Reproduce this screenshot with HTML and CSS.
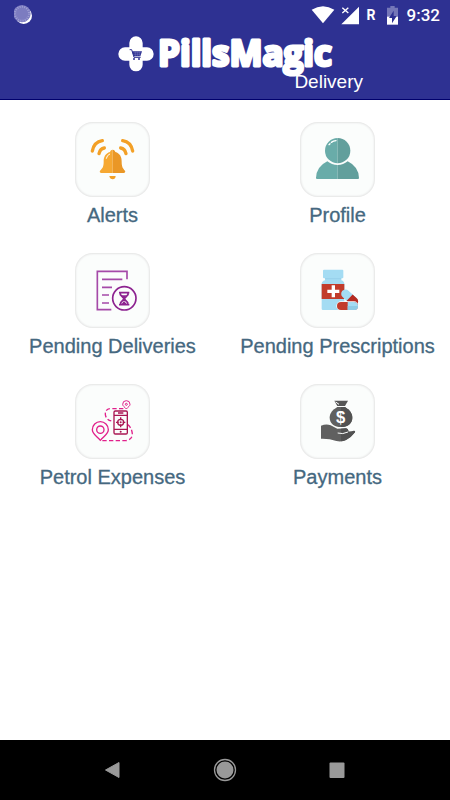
FILE: index.html
```html
<!DOCTYPE html>
<html lang="en">
<head>
<meta charset="utf-8">
<meta name="viewport" content="width=device-width, initial-scale=1">
<title>PillsMagic Delivery</title>
<link rel="stylesheet" href="styles.css">
</head>
<body>
<header class="top">
  <div class="status">
    <svg class="sync" width="20" height="20" viewBox="4 0 60 60" aria-hidden="true">
      <circle cx="33" cy="32" r="25" fill="#fff"/>
      <circle cx="28" cy="26" r="26" fill="#7c7cc0"/>
      <circle cx="28" cy="26" r="21" fill="none" stroke="#a0a0d4" stroke-width="6" stroke-dasharray="3 4"/>
    </svg>
    <div class="status-right">
      <svg width="94" height="22" viewBox="30 12 282 66" aria-hidden="true">
        <path d="M32 29Q66 8 100 29L66 70Z" fill="#fff"/>
        <path d="M174 20V73H121Z" fill="#fff"/>
        <path d="M123 22l20 18M143 22l-20 18" stroke="#2e3192" stroke-width="10"/>
        <path d="M124 23l18 16M142 23l-18 16" stroke="#fff" stroke-width="4"/>
        <path d="M258 23h10v-5h13v5h10v28h-33z" fill="#7577b8"/>
        <path d="M258 50h33v24h-33z" fill="#fff"/>
        <path d="M278 32L264 54h9v16l14-22h-9z" fill="#2e3192"/>
      </svg>
      <span class="roaming">R</span>
      <time class="clock">9:32</time>
    </div>
  </div>
  <div class="brand">
    <svg class="mark" width="36" height="36" viewBox="25 18 108 108" aria-hidden="true">
      <path d="M79 39V104M46 72H112" stroke="#fff" stroke-width="40" stroke-linecap="round"/>
      <path d="M60 59h6l7 23h20" fill="none" stroke="#2e3192" stroke-width="3"/>
      <path d="M67 64H97L92 79H72Z" fill="#2e3192"/>
      <path d="M72 68h21M73 73h19M77 65v13M83 65v13M89 65v13" stroke="#8f91cc" stroke-width="1"/>
      <circle cx="73" cy="87" r="3" fill="#2e3192"/><circle cx="88" cy="87" r="3" fill="#2e3192"/>
    </svg>
    <h1 class="name">
      <svg width="174" height="44" viewBox="0 0 174 44"><text class="word" x="0" y="30">PillsMagic</text></svg>
      <span class="sub">Delivery</span>
    </h1>
  </div>
</header>
<main class="menu">
  <a class="item" href="#alerts">
    <svg class="tile" viewBox="15 21 225 225" aria-hidden="true">
      <g fill="none" stroke="#f3a026" stroke-width="10" stroke-linecap="round">
        <path d="M67 108Q72 81 97 77M87 116Q90 101 103 99M188 108Q183 81 158 77M168 116Q165 101 152 99"/>
      </g>
      <path d="M118 183h19q-1 10-9 10t-10-10z" fill="#f3a026"/>
      <path d="M128 104c-5 0-7 3-8 7-14 4-19 15-19 29 0 16-4 20-11 27-2 3 0 7 4 7h34z" fill="#f6a832"/>
      <path d="M128 104c5 0 7 3 8 7 14 4 19 15 19 29 0 16 4 20 10 27 2 3 0 7-4 7h-33z" fill="#ea9726"/>
      <path d="M109 130q2-10 10-13" fill="none" stroke="#fff" stroke-width="3" stroke-linecap="round"/>
    </svg>
    <span class="label">Alerts</span>
  </a>
  <a class="item" href="#profile">
    <svg class="tile" viewBox="15 21 225 225" aria-hidden="true">
      <path d="M63 189q1-34 34-50 13 11 31 11v42H66q-3 0-3-3z" fill="#69aca9"/>
      <path d="M192 189q-1-34-34-50-13 11-30 11v42h61q3 0 3-3z" fill="#629f9c"/>
      <path d="M128 69a38 38 0 0 0 0 76z" fill="#69aca9"/>
      <path d="M128 69a38 38 0 0 1 0 76z" fill="#629f9c"/>
      <path d="M102 89l3-3M109 82q6-4 14-5" fill="none" stroke="#fff" stroke-width="4" stroke-linecap="round"/>
    </svg>
    <span class="label">Profile</span>
  </a>
  <a class="item" href="#deliveries">
    <svg class="tile" viewBox="15 24 225 225" aria-hidden="true">
      <g fill="none" stroke="#a54aa8" stroke-width="5">
        <path d="M171 103V79H82V194H124M96 103H157M96 127H126M96 150H117M96 174H117"/>
        <g stroke="#8d2390"><circle cx="163" cy="160" r="35"/><path d="M147 143H178M147 179H178M151 143v6l22 24v6M174 143v6l-22 24v6"/></g>
      </g>
      <path d="M155 151h15l-8 9zM155 177l7-9 8 9z" fill="#8d2390"/>
    </svg>
    <span class="label">Pending Deliveries</span>
  </a>
  <a class="item" href="#prescriptions">
    <svg class="tile" viewBox="15 24 225 225" aria-hidden="true">
      <path d="M87 74h55q3 0 3 3v20q0 3-3 3h-3v6q9 3 9 11v74q0 4-4 4H84q-4 0-4-4v-74q0-8 10-11v-6h-3q-3 0-3-3V77q0-3 3-3z" fill="#a4dcf3"/>
      <path d="M90 101h49" stroke="#8fcce5" stroke-width="2"/>
      <path d="M80 117h68v45H80z" fill="#c23c2b"/>
      <path d="M115 121v36M97 139h36" stroke="#fff" stroke-width="10"/>
      <g transform="rotate(43 164 158)">
        <rect x="134" y="145" width="60" height="26" rx="13" fill="#a4dcf3"/>
        <path d="M164 145h17a13 13 0 0 1 0 26h-17z" fill="#b62a20"/>
      </g>
      <rect x="124" y="169" width="67" height="28" rx="14" fill="#fbfdfc"/>
      <rect x="126" y="171" width="63" height="24" rx="12" fill="#c23c2b"/>
      <path d="M158 171h19a12 12 0 0 1 0 24h-19z" fill="#a4dcf3"/>
      <path d="M158 183h31a12 12 0 0 1-12 12h-19z" fill="#8fcce5"/>
    </svg>
    <span class="label">Pending Prescriptions</span>
  </a>
  <a class="item" href="#petrol">
    <svg class="tile" viewBox="15 18 225 225" aria-hidden="true">
      <g fill="none" stroke="#e1208b" stroke-width="4">
        <path d="M91 187C78 173 67 167 67 155a24 24 0 0 1 48 0c0 12-11 18-24 32z"/>
        <circle cx="91" cy="155" r="11"/>
        <path d="M169 93C163 86 158 84 158 79a11 11 0 0 1 22 0c0 5-5 7-11 14z" stroke-width="3"/>
        <circle cx="169" cy="79" r="3" stroke-width="3"/>
        <path d="M160 92H122Q106 92 106 109 108 128 131 130M97 188H168Q187 184 187 168 185 148 173 140" stroke-dasharray="13 7"/>
      </g>
      <g fill="none" stroke="#a91652" stroke-width="4">
        <rect x="132" y="99" width="40" height="69" rx="4"/>
        <path d="M132 112h40M132 154h40M144 105h16" />
        <circle cx="152" cy="133" r="9"/>
        <path d="M152 118v9M152 139v9M138 133h8M158 133h8"/>
      </g>
      <circle cx="152" cy="133" r="3" fill="#a91652"/><circle cx="152" cy="161" r="3" fill="#a91652"/>
    </svg>
    <span class="label">Petrol Expenses</span>
  </a>
  <a class="item" href="#payments">
    <svg class="tile" viewBox="15 18 225 225" aria-hidden="true">
      <path d="M118 68h41l-9 16h-23z" fill="#565656"/>
      <path d="M122 72l10 7" stroke="#fff" stroke-width="3"/>
      <path d="M127 87h23c14 9 22 19 22 32 0 18-15 28-34 28s-34-10-34-28c0-13 8-23 23-32z" fill="#606060"/>
      <path d="M138 87h12c14 9 22 19 22 32 0 18-15 28-34 28z" fill="#525252"/>
      <text class="coin" x="137" y="136" text-anchor="middle">$</text>
      <path d="M78 143q16-6 29-1l20 10 26-1q8 2 7 10 10 0 17-3 5 0 3 5-12 16-27 23-14 7-29 3-22-8-46-7z" fill="#606060"/>
      <path d="M138 152l15-1q8 2 7 10 10 0 17-3 5 0 3 5-12 16-27 23-7 4-15 4z" fill="#525252"/>
      <path d="M128 165q15 5 31-3" fill="none" stroke="#fbfdfc" stroke-width="3"/>
    </svg>
    <span class="label">Payments</span>
  </a>
</main>
<nav class="nav" aria-label="System">
  <button class="key" aria-label="Back"><svg width="24" height="24" viewBox="0 0 24 24"><path d="M4.500 12 18 4.500V19.500Z" fill="#999" stroke="#999" stroke-linejoin="round"/></svg></button>
  <button class="key" aria-label="Home"><svg width="24" height="24" viewBox="0 0 24 24"><circle cx="12" cy="12" r="8.500" fill="#999"/><circle cx="12" cy="12" r="10.500" fill="none" stroke="#999" stroke-width="1.300"/></svg></button>
  <button class="key" aria-label="Recent apps"><svg width="24" height="24" viewBox="0 0 24 24"><rect x="4.500" y="4.500" width="15" height="15.500" rx="1" fill="#999"/></svg></button>
</nav>
</body>
</html>
```
FILE: styles.css
```css
* {
  box-sizing: border-box;
}

body {
  margin: 0;
  min-height: 100vh;
  display: flex;
  flex-direction: column;
  background: #fff;
  font-family: "Liberation Sans", Arial, sans-serif;
}

.top {
  height: 100px;
  background: #2e3192;
  border-bottom: 1px solid #00006c;
  color: #fff;
}

.status {
  height: 30px;
  display: flex;
  align-items: center;
  justify-content: space-between;
  padding: 0 10px 0 14px;
}

.status-right {
  position: relative;
  display: flex;
  align-items: center;
  gap: 2px;
}

.roaming {
  position: absolute;
  left: 56px;
  font: 700 14px/20px Roboto, sans-serif;
}

.clock {
  font: 500 17px/20px Roboto, sans-serif;
}

.brand {
  display: flex;
  justify-content: center;
  gap: 4px;
  padding-top: 6px;
}

.name {
  position: relative;
  margin: 0;
  line-height: 0;
}

.word {
  font: 700 35px "Open Sans", sans-serif;
  fill: #fff;
  stroke: #fff;
  stroke-width: 3px;
  stroke-linejoin: round;
}

.name svg {
  overflow: visible;
}

.sub {
  position: absolute;
  right: -31px;
  top: 35px;
  font: 400 19px/22px "Liberation Sans", Arial, sans-serif;
}

.menu {
  flex: 1;
  display: grid;
  grid-template-columns: 1fr 1fr;
  align-content: start;
  row-gap: 26px;
  padding-top: 22px;
}

.item {
  display: flex;
  flex-direction: column;
  align-items: center;
  gap: 6px;
  color: #456880;
  text-decoration: none;
}

.tile {
  width: 75px;
  height: 75px;
  border-radius: 18px;
  background: #fbfdfc;
  box-shadow: inset 0 0 2px 1px #e4e4e4;
}

.label {
  font-size: 20px;
  line-height: 24px;
  white-space: nowrap;
  -webkit-text-stroke: 0.3px #456880;
}

.coin {
  font: 700 50px "Liberation Sans", Arial, sans-serif;
  fill: #fff;
}

.nav {
  height: 60px;
  display: flex;
  justify-content: center;
  gap: 88px;
  background: #000;
}

.key {
  display: flex;
  align-items: center;
  padding: 0;
  border: 0;
  background: none;
}
```
